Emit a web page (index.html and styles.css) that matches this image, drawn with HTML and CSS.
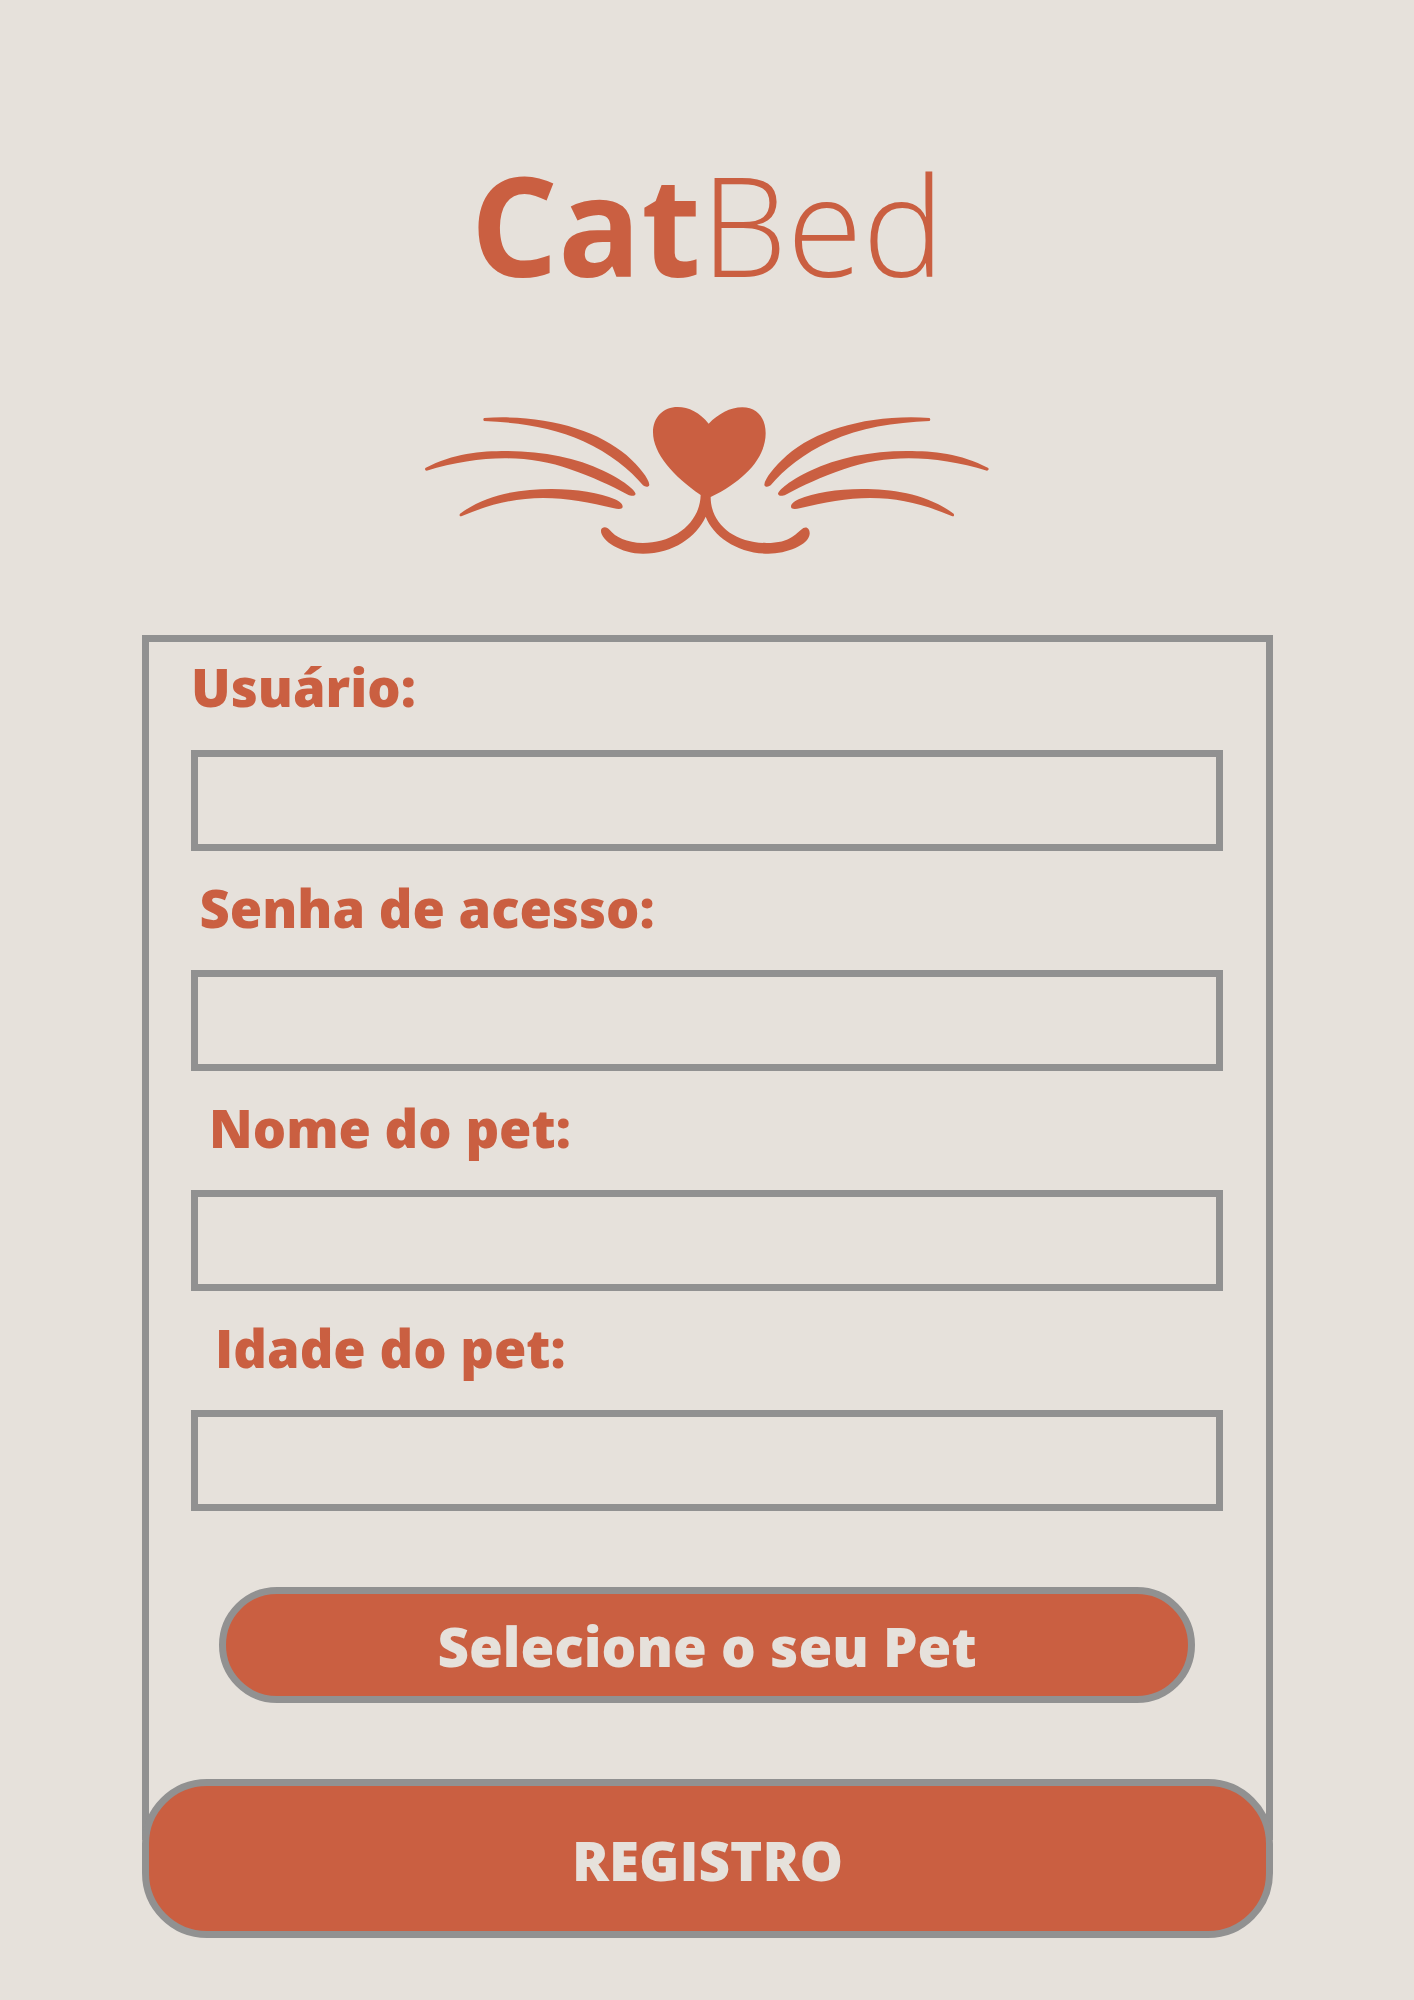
FILE: index.html
```html
<!DOCTYPE html>
<html lang="pt-BR">
<head>
<meta charset="utf-8">
<title>CatBed</title>
<link rel="stylesheet" href="styles.css">
</head>
<body>
<main class="page">
  <h1 class="brand"><span class="brand-bold">Cat</span><span class="brand-light">Bed</span></h1>
  <svg class="muzzle" viewBox="0 0 1780 540" aria-hidden="true">
    <defs>
      <g id="whiskers">
        <path d="M222 84C400 72 560 118 650 196C690 232 716 266 718 284C717 292 706 292 699 286C660 240 600 190 520 154C430 112 330 98 222 93Q218 88 222 84Z"/>
        <path d="M46 234C130 190 210 183 290 183C400 183 500 204 580 242C640 270 676 300 677 312C674 320 662 318 654 314C600 286 550 262 480 238C420 216 350 205 285 205C210 205 130 218 50 242Q43 241 46 234Z"/>
        <path d="M150 371C230 312 330 297 425 297C500 297 570 309 615 328C640 340 640 350 636 355C630 359 620 357 612 355C540 338 470 324 400 324C310 324 230 346 154 379Q146 379 150 371Z"/>
      </g>
    </defs>
    <use href="#whiskers"/>
    <use href="#whiskers" transform="translate(1781 0) scale(-1 1)"/>
    <path d="M896 101C870 68 836 51 803 51C760 51 729 82 729 127C729 190 790 260 872 315C870 400 790 459 699 459C650 459 615 440 600 421C590 408 576 410 573 420C570 450 632 491 699 491C790 491 860 440 887 380C910 440 985 491 1075 491C1130 491 1196 465 1199 432C1200 418 1192 408 1180 414C1170 421 1160 432 1146 441C1130 452 1105 459 1070 459C970 459 902 400 902 321C1000 274 1067 205 1067 130C1067 82 1040 52 997 52C960 52 925 72 896 101Z"/>
  </svg>
  <form class="card">
    <div class="field field-user"><label for="user">Usuário:</label><input id="user" type="text"></div>
    <div class="field field-password"><label for="password">Senha de acesso:</label><input id="password" type="password"></div>
    <div class="field field-name"><label for="pet-name">Nome do pet:</label><input id="pet-name" type="text"></div>
    <div class="field field-age"><label for="pet-age">Idade do pet:</label><input id="pet-age" type="text"></div>
    <button class="button select-pet" type="button">Selecione o seu Pet</button>
  </form>
  <button class="button register" type="button">REGISTRO</button>
</main>
</body>
</html>
```

FILE: styles.css
```css
* { box-sizing: border-box; }

body {
  margin: 0;
  background: #e6e1db;
  color: #ca5f41;
  font-family: "Open Sans", sans-serif;
}

.page {
  display: flex;
  flex-direction: column;
  width: 1414px;
  height: 2000px;
  padding: 155px 141px 0 142px;
}

.brand {
  margin: 0 0 97px 328.5px;
  font-size: 137.5px;
  line-height: 138px;
  white-space: nowrap;
}

.brand-bold { font-weight: 700; }
.brand-light { font-weight: 300; }

.muzzle {
  display: block;
  flex: none;
  width: 593.33px;
  height: 180px;
  margin-left: 268px;
  fill: #ca5f41;
}

.card {
  display: flex;
  flex-direction: column;
  height: 1205px;
  margin-top: 65px;
  padding: 14px 43px 0 42px;
  border: 7px solid #919191;
  border-bottom: 0;
}

.field {
  display: flex;
  flex-direction: column;
  flex: none;
  height: 220px;
}

.field label {
  height: 64px;
  margin-bottom: 30px;
  font-size: 52.45px;
  font-weight: 800;
  line-height: 64px;
  white-space: nowrap;
}

.field-user label {
  height: 63px;
  margin-bottom: 31px;
  line-height: 62px;
}

.field-password label { padding-left: 8.5px; }
.field-name label { padding-left: 18px; }
.field-age label { padding-left: 24px; }

.field input {
  width: 100%;
  height: 101px;
  padding: 0 20px;
  border: 7px solid #919191;
  border-radius: 0;
  outline: 0;
  background: transparent;
  color: inherit;
  font: inherit;
  font-size: 44px;
}

.button {
  flex: none;
  padding: 0;
  border: 7px solid #919191;
  background: #ca5f41;
  color: #e6e1db;
  font-family: inherit;
  font-size: 54.7px;
  font-weight: 800;
  white-space: nowrap;
}

.select-pet {
  height: 116px;
  margin: 51px 28px 0;
  padding-top: 2px;
  border-radius: 58px;
}

.register {
  height: 158.5px;
  margin-top: -61px;
  padding-top: 3px;
  border-radius: 65px;
}
```
